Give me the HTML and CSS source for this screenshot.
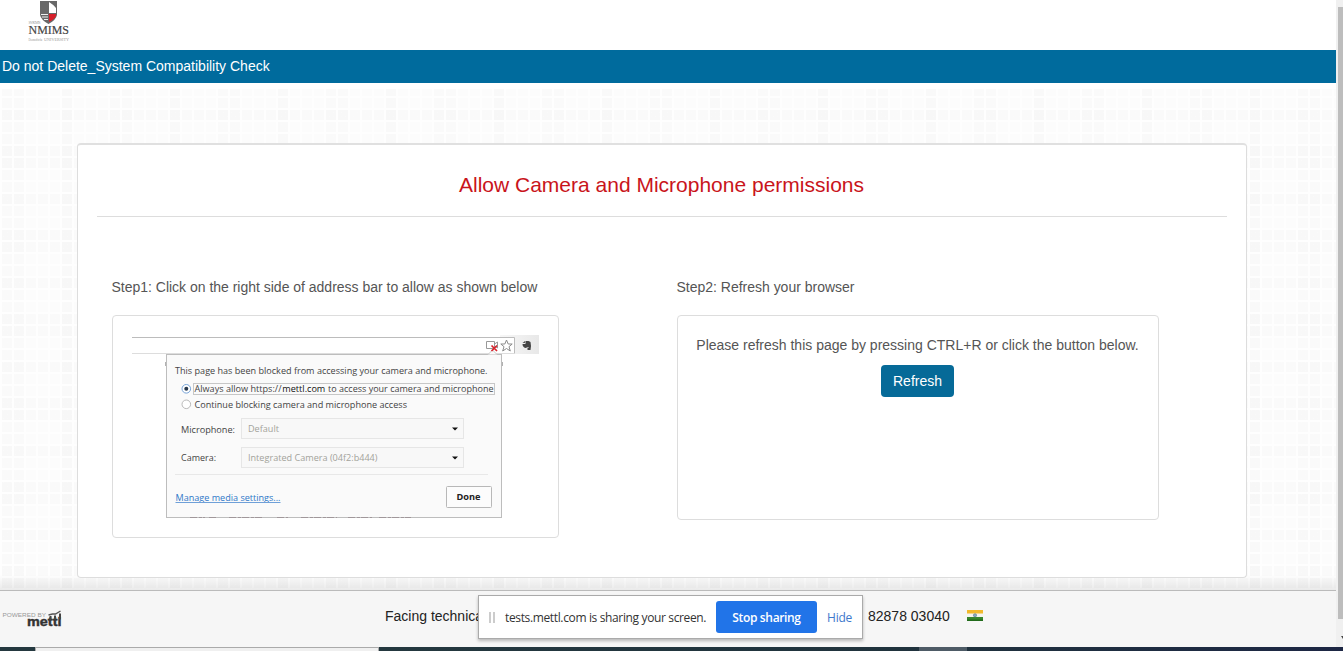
FILE: index.html
```html
<!DOCTYPE html>
<html lang="en">
<head>
<meta charset="utf-8">
<title>System Compatibility Check</title>
<link rel="stylesheet" href="styles.css">
</head>
<body>
<div class="screen">
  <div class="window">
    <div class="page">
      <header class="brand">
        <svg class="brand-logo" width="44" height="44" viewBox="0 0 44 44" role="img" aria-label="NMIMS University">
          <path d="M12 1h17v14q-1 5-8.500 9q-7.500-4-8.500-9z" fill="#686868"/>
          <path d="M21 2q5 3 7 6v5h-7z" fill="#fff"/>
          <path d="M21 14h7v2q-1 3-7 6z" fill="#d6202b"/>
          <path d="M13 14.500h7M14 17h6M16 19.500h4" stroke="#eee" stroke-width="1"/>
          <text x="0.500" y="23.500" font-size="4" textLength="12" class="tiny">SVKM'S</text>
          <text x="0.500" y="34" font-size="13.500" textLength="40.500" lengthAdjust="spacingAndGlyphs" class="name">NMIMS</text>
          <text x="0.500" y="40.500" font-size="3" textLength="14" class="tiny">Deemed to be</text>
          <text x="16" y="41" font-size="4.500" textLength="25" lengthAdjust="spacingAndGlyphs" class="tiny">UNIVERSITY</text>
        </svg>
      </header>
      <div class="titlebar">Do not Delete_System Compatibility Check</div>
      <main class="content">
        <section class="card">
          <h1 class="card-title">Allow Camera and Microphone permissions</h1>
          <div class="steps">
            <div class="step">
              <p class="step-label">Step1: Click on the right side of address bar to allow as shown below</p>
              <div class="panel panel-picture">
                <svg class="picture" width="445" height="221" viewBox="113 316 445 221">
                  <defs><linearGradient id="bar" x1="0" x2="1"><stop offset="0" stop-color="#f7f7f7"/><stop offset="1" stop-color="#e8e8e8"/></linearGradient></defs>
                  <rect x="500" y="335" width="39" height="19" fill="url(#bar)"/>
                  <path d="M132 337.500H514.500V353.500H132z" fill="#fff"/>
                  <path d="M132 337.500H514.500V353.500" fill="none" stroke="#bcbcbc"/>
                  <path d="M132 353.500H514" stroke="#ddd"/>
                  <path d="M166.500 362v4M501.500 362v4" stroke="#666" stroke-width="2"/>
                  <rect x="166.500" y="354.500" width="335" height="163" fill="#fafafa" stroke="#bdbdbd"/>
                  <path d="M488 354.500l4.500-4.500l4.500 4.500" fill="#fafafa" stroke="#ccc"/>
                  <path d="M190 517.500h15m4 0h8m12 0h34m14 0h11m13 0h36m11 0h24m7 0h32" stroke="#8e7e84" stroke-dasharray="7 2 3 1" opacity=".6"/>
                  <path d="M486.500 341.500h8v7h-8zM494.500 344l3-2v6l-3-2" fill="#fff" stroke="#999"/>
                  <path d="M491.500 345.500l5.500 5.500m0-5.500l-5.500 5.500" stroke="#d8232c" stroke-width="1.700"/>
                  <path d="M506.500 340l1.700 4h4l-3.200 2.700l1.300 4.300l-3.800-2.500l-3.800 2.500l1.300-4.300l-3.200-2.700h4z" fill="#fff" stroke="#8b8b8b"/>
                  <path d="M525.500 341h3l2 1q1 4 0 8h-3v-2h1v-1l-3 1q-3-1-3-4h3z" fill="#454545"/>
                  <path d="M522.500 343l2.500-2v2z" fill="#555"/>
                  <g class="shot">
                    <text x="175" y="374" textLength="312.500" lengthAdjust="spacingAndGlyphs">This page has been blocked from accessing your camera and microphone.</text>
                    <rect x="193.500" y="383.500" width="301" height="11" fill="none" stroke="#c7c7c7"/>
                    <text x="194.500" y="392" textLength="87" lengthAdjust="spacingAndGlyphs">Always allow https://</text>
                    <text x="282.300" y="392" textLength="43" lengthAdjust="spacingAndGlyphs" class="site">mettl.com</text>
                    <text x="328" y="392" textLength="165.500" lengthAdjust="spacingAndGlyphs">to access your camera and microphone</text>
                    <text x="194.500" y="407.500" textLength="212.500" lengthAdjust="spacingAndGlyphs">Continue blocking camera and microphone access</text>
                    <circle cx="186.300" cy="388.800" r="4.300" fill="#fff" stroke="#76a3d8"/>
                    <circle cx="186.300" cy="388.800" r="2" fill="#27384c"/>
                    <circle cx="186.300" cy="404.300" r="4.300" fill="#fff" stroke="#b9b9b9"/>
                    <text x="181" y="432.500" textLength="54" lengthAdjust="spacingAndGlyphs">Microphone:</text>
                    <text x="181" y="461" textLength="35" lengthAdjust="spacingAndGlyphs">Camera:</text>
                    <rect x="241.500" y="418.500" width="222" height="20" fill="#f8f8f8" stroke="#e6e6e6"/>
                    <rect x="241.500" y="447.500" width="222" height="20" fill="#f8f8f8" stroke="#e6e6e6"/>
                    <text x="248" y="431.500" textLength="31" lengthAdjust="spacingAndGlyphs" class="off">Default</text>
                    <text x="248" y="460.500" textLength="129.500" lengthAdjust="spacingAndGlyphs" class="off">Integrated Camera (04f2:b444)</text>
                    <path d="M452 427.500h6l-3 3zM452 456.500h6l-3 3z" fill="#111"/>
                    <path d="M175 474.500h313" stroke="#e8e8e8"/>
                    <text x="175.500" y="501" textLength="105" lengthAdjust="spacingAndGlyphs" class="manage">Manage media settings...</text>
                    <path d="M175.500 502.500h105" stroke="#6fa0d8"/>
                    <rect x="446.500" y="486.500" width="45" height="21" rx="1" fill="#fcfcfc" stroke="#b8b8b8"/>
                    <text x="456.500" y="500" textLength="24" lengthAdjust="spacingAndGlyphs" class="done">Done</text>
                  </g>
                </svg>
              </div>
            </div>
            <div class="step">
              <p class="step-label">Step2: Refresh your browser</p>
              <div class="panel panel-refresh">
                <p class="hint">Please refresh this page by pressing CTRL+R or click the button below.</p>
                <button class="refresh">Refresh</button>
              </div>
            </div>
          </div>
        </section>
      </main>
      <footer class="footer">
        <svg class="mettl" width="64" height="24" viewBox="0 0 64 24" role="img" aria-label="Powered by mettl">
          <text x="2.500" y="8" font-size="6.200" textLength="43.500" lengthAdjust="spacingAndGlyphs" class="powered">POWERED BY</text>
          <text x="27" y="17.300" font-size="12" textLength="34.500" lengthAdjust="spacingAndGlyphs" class="mettl-name">mettl</text>
          <path d="M48.500 6l4-1h3l5-3" fill="none" stroke="#555" stroke-width="1.400"/>
          <path d="M50.500 7v4M55 6.500v4M60 4.500v6" stroke="#444" stroke-width="2"/>
        </svg>
        <span class="help">Facing technica</span>
        <span class="phone">82878 03040</span>
        <svg class="flag" width="16" height="12" viewBox="0 0 16 12">
          <path d="M0 0h16v4H0z" fill="#f2b92c"/><path d="M0 3.500h16v4H0z" fill="#f5f5ef"/><path d="M0 7h16v4H0z" fill="#38862c"/>
          <path d="M0 9.500h16V11H0z" fill="#216b1b"/><circle cx="8" cy="5.300" r="1.600" fill="#8faab5" stroke="#527c98" stroke-width=".6"/>
        </svg>
      </footer>
    </div>
    <div class="scroll">
      <div class="thumb"></div>
      <svg class="arrow" width="2" height="3" viewBox="0 0 2 3"><path d="M0 0h2v3z" fill="#444"/></svg>
    </div>
  </div>
  <div class="taskbar"><span class="task-start"></span><span class="task-search"></span><span class="task-gap"></span><span class="task-active"></span></div>
  <div class="share">
    <span class="grip"></span>
    <span class="share-text">tests.mettl.com is sharing your screen.</span>
    <button class="stop">Stop sharing</button>
    <a class="hide">Hide</a>
  </div>
</div>
</body>
</html>
```
FILE: styles.css
```css
* { box-sizing: border-box; }
body { margin: 0; overflow: hidden; font-family: "Liberation Sans", Arial, sans-serif; font-size: 14px; color: #555; background: #fff; }
p, h1 { margin: 0; }
button { border: 0; padding: 0; font: inherit; }
svg { display: block; }
.screen { position: relative; width: 1343px; height: 651px; display: flex; flex-direction: column; }
.window { display: flex; height: 647px; }
.page { width: 1336px; display: flex; flex-direction: column; }
.brand { height: 50px; padding-left: 28px; background: #fff; }
.brand-logo { font-family: "Liberation Serif", serif; }
.tiny { fill: #999; }
.name { fill: #444; stroke: #444; stroke-width: .2px; }
.titlebar { height: 33px; padding-left: 2px; background: #006b9d; color: #fff; font-size: 14px; line-height: 32px; white-space: nowrap; }
.content {
  height: 507px; padding: 60px 0 0 77px;
  background:
    linear-gradient(to bottom, #fff 0 6px, transparent 6px 492px, rgba(0,0,0,.08) 507px),
    repeating-linear-gradient(90deg, #fefefe 0 2px, transparent 2px 12px),
    repeating-linear-gradient(0deg, #fefefe 0 2px, transparent 2px 12px),
    repeating-linear-gradient(90deg, rgba(0,0,0,.008) 0 24px, transparent 24px 60px, rgba(0,0,0,.01) 60px 72px, transparent 72px 108px),
    repeating-linear-gradient(0deg, rgba(0,0,0,.008) 0 24px, transparent 24px 48px, rgba(0,0,0,.006) 48px 60px, transparent 60px 84px),
    #fcfcfc;
}
.card { width: 1170px; height: 435px; padding: 0 19px; border: 1px solid #ddd; border-top: 2px solid #e0e0e0; border-radius: 4px; background: #fff; }
.card-title { height: 72px; padding-right: 1px; border-bottom: 1px solid #ddd; color: #c9141b; font-size: 21px; font-weight: 400; line-height: 80px; text-align: center; white-space: nowrap; }
.steps { display: flex; gap: 118px; padding: 62px 0 0 15px; }
.step-label { height: 36px; margin-left: -.5px; line-height: 16px; white-space: nowrap; letter-spacing: -.01px; }
.panel { border: 1px solid #ddd; border-radius: 4px; background: #fff; }
.panel-picture { width: 447px; height: 223px; }
.panel-refresh { width: 482px; height: 205px; padding: 21px 1px 0 0; display: flex; flex-direction: column; align-items: center; gap: 12px; }
.hint { line-height: 16px; white-space: nowrap; }
.refresh { width: 73px; height: 32px; border-radius: 4px; background: #066a98; color: #fff; }
.shot { font-family: "Open Sans", "Noto Sans", sans-serif; font-size: 9.4px; fill: #444; }
.site { fill: #111; }
.off { fill: #a3a39b; }
.manage { fill: #2e78c8; }
.done { font-size: 9.2px; font-weight: 700; fill: #222; }
.footer { height: 57px; border-top: 1px solid #bbb; background: #f6f6f6; display: flex; align-items: flex-start; color: #222; line-height: 16px; padding-top: 17px; white-space: nowrap; }
.mettl { margin-top: 1px; }
.powered { fill: #999; }
.mettl-name { fill: #333; font-weight: 700; stroke: #333; stroke-width: .4px; }
.help { width: 483px; margin-left: 321px; }
.phone { width: 99px; }
.flag { margin-top: 2px; }
.scroll { width: 7px; background: #f0f0f0; padding: 7px 0 0 2px; display: flex; flex-direction: column; }
.thumb { height: 612px; background: #bdbdbd; }
.arrow { margin: 17px 0 0 3px; }
.taskbar { height: 4px; display: flex; background: linear-gradient(90deg, #24383f 0 380px, #20333d 900px, #1d2744 1343px); }
.task-start { width: 35px; }
.task-search { width: 344px; background: #f0f0f0; border: solid #aaa; border-width: 1px 1px 0; }
.task-gap { width: 540px; }
.task-active { width: 48px; background: #4e5b66; }
.share { position: absolute; left: 478px; top: 595px; width: 385px; height: 44px; display: flex; align-items: center; background: #fff; border: 1px solid #aaa; box-shadow: 0 2px 3px rgba(0,0,0,.25); font-family: "Open Sans", "Noto Sans", sans-serif; font-size: 12px; color: #333; white-space: nowrap; }
.grip { width: 6px; height: 11px; margin-left: 10px; border: solid #ccc; border-width: 0 2px; }
.share-text { width: 201px; margin-left: 10px; letter-spacing: -.36px; }
.stop { width: 101px; height: 32px; margin-left: 10px; border-radius: 3px; background: #2174e8; color: #fff; font-weight: 600; letter-spacing: -.35px; }
.hide { margin-left: 10px; color: #3e78cc; letter-spacing: -.2px; }
```
